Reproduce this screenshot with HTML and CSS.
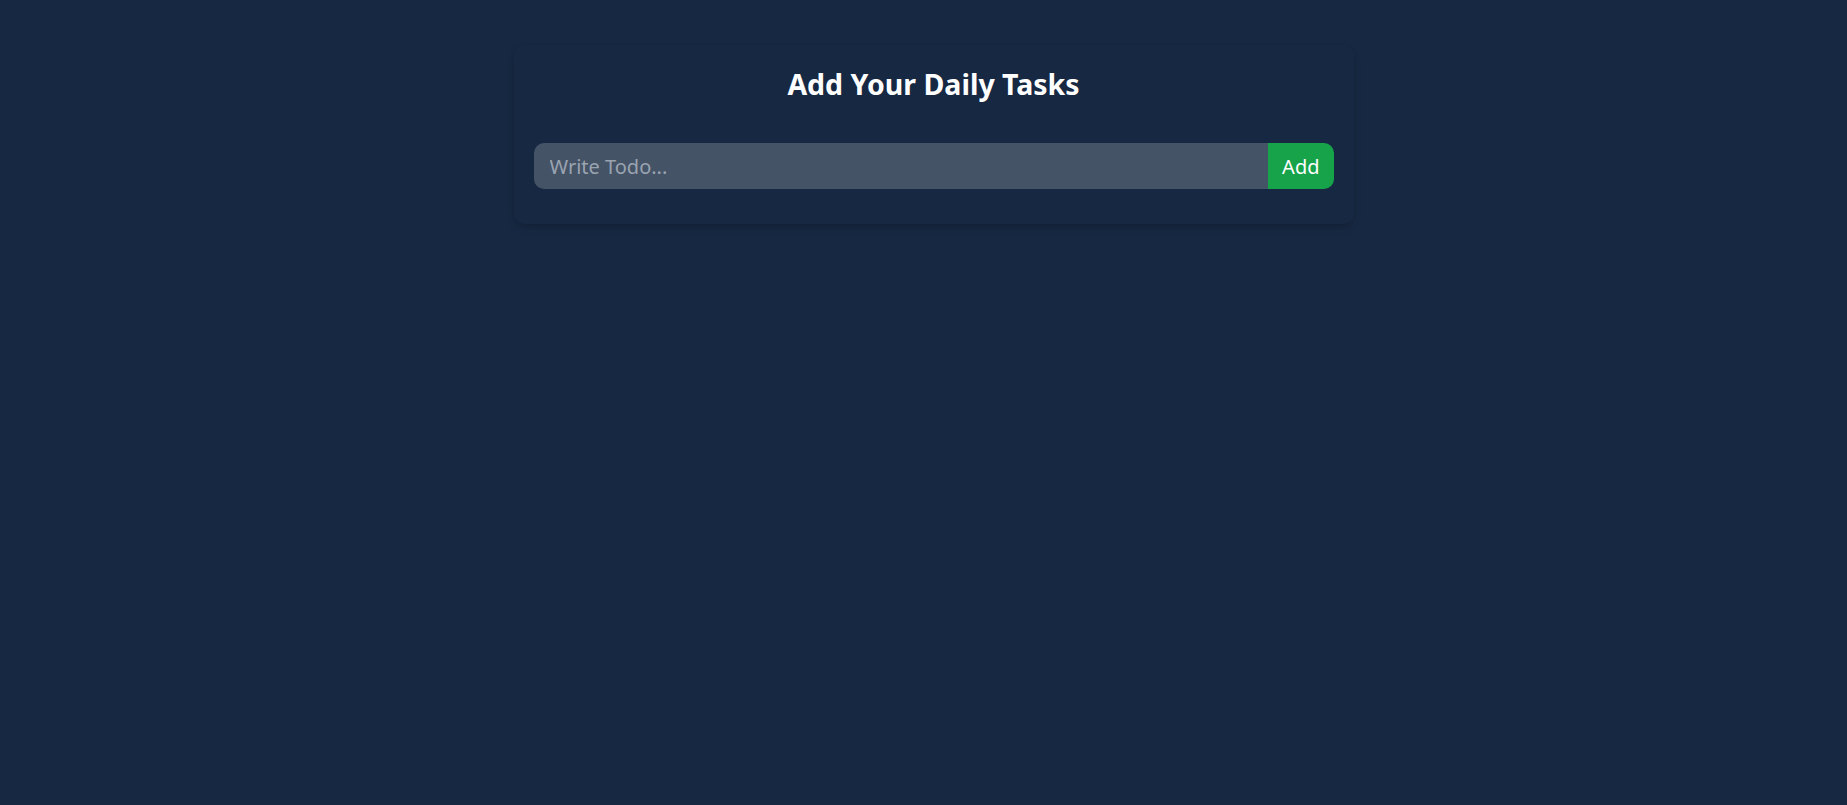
FILE: index.html
```html
<!DOCTYPE html>
<html lang="en">
<head>
<meta charset="utf-8">
<title>Todo</title>
<link rel="stylesheet" href="styles.css">
</head>
<body>
<div class="page">
  <div class="card">
    <h1 class="title">Add Your Daily Tasks</h1>
    <form class="todo-form" onsubmit="return false;">
      <input class="todo-input" type="text" placeholder="Write Todo...">
      <button class="todo-btn" type="submit">Add</button>
    </form>
  </div>
</div>
</body>
</html>
```

FILE: styles.css
```css
html, body {
  margin: 0;
  padding: 0;
}
body {
  background: #172842;
  min-height: 805px;
  font-family: "Noto Sans", "Open Sans", sans-serif;
}
.page {
  padding-top: 45px;
  padding-left: 20px;
}
.card {
  width: 840px;
  margin: 0 auto;
  box-sizing: border-box;
  padding: 15px 20px;
  border-radius: 10px;
  box-shadow: 0 5px 8px -1px rgba(0,0,0,0.12), 0 2px 5px -2px rgba(0,0,0,0.12);
  color: #fff;
}
.title {
  margin: 4px 0 39px;
  font-size: 28.5px;
  line-height: 40px;
  font-weight: 700;
  text-align: center;
}
.todo-form {
  display: flex;
  margin-bottom: 20px;
}
.todo-input {
  flex: 1;
  min-width: 0;
  height: 46px;
  box-sizing: border-box;
  border: none;
  outline: none;
  border-radius: 10px 0 0 10px;
  background: rgba(255,255,255,0.2);
  padding: 0 16px;
  font-family: inherit;
  font-size: 20px;
  color: #fff;
}
.todo-input::placeholder {
  color: #9aa3b0;
}
.todo-btn {
  flex-shrink: 0;
  height: 46px;
  border: none;
  border-radius: 0 10px 10px 0;
  background: #16a34a;
  color: #fff;
  padding: 0 14px;
  font-family: inherit;
  font-size: 20px;
  cursor: pointer;
}
```
